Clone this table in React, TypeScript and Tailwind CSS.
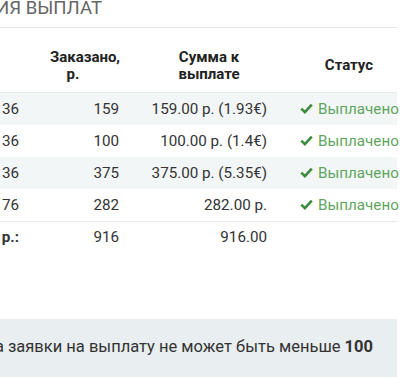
const rows = [
  { id: '№ 36', ordered: '159', sum: '159.00 р. (1.93€)' },
  { id: '№ 36', ordered: '100', sum: '100.00 р. (1.4€)' },
  { id: '№ 36', ordered: '375', sum: '375.00 р. (5.35€)' },
  { id: '№ 76', ordered: '282', sum: '282.00 р.' },
];

const Check = () => (
  <svg className="w-[13px] h-[11px] text-[#3d8b3d] shrink-0" viewBox="0 0 13 11" fill="none" stroke="currentColor">
    <path d="M1.3 5.6l3.6 3.5L11.8 1.6" strokeWidth={2.6} strokeLinejoin="miter" />
  </svg>
);

export default function App() {
  return (
    <div
      className="w-[415px] h-[377px] overflow-hidden bg-white text-[#333]"
      style={{ fontFamily: 'Roboto, "Noto Sans", sans-serif' }}
    >
      <div className="-ml-[120px] w-[517px]">
        {/* Заголовок */}
        <div className="w-[222px] flex justify-end whitespace-nowrap">
          <h2 className="-mt-[4px] text-[18.6px] leading-[24px] text-[#666] font-normal">
            ИСТОРИЯ ВЫПЛАТ
          </h2>
        </div>
        <hr className="mt-[7px] border-t border-[#e8e8e8]" />

        {/* Таблица */}
        <div className="mt-[18px] text-[15.2px]">
          <div className="grid grid-cols-[139px_108px_148px_122px] font-bold text-[15px] leading-[17px] text-[#222] border-b border-[#e6eaeb] pb-[9px]">
            <div />
            <div className="pt-[3px]">
              <div className="text-center pl-[24px]">Заказано,</div>
              <div className="text-center">р.</div>
            </div>
            <div className="text-center pl-[16px] pt-[3px]">Сумма к<br />выплате</div>
            <div className="text-center pl-[26px] self-center pt-[2px]">Статус</div>
          </div>

          {rows.map((r, i) => (
            <div
              key={i}
              className={`grid grid-cols-[139px_108px_148px_122px] h-[32px] items-center ${i % 2 === 0 ? 'bg-[#f3f6f7]' : 'bg-white'}`}
            >
              <div className="text-right">{r.id}</div>
              <div className="text-right pr-[8px]">{r.ordered}</div>
              <div className="text-right pr-[8px]">{r.sum}</div>
              <div className="flex items-center gap-[5px] pl-[25px] text-[#5fa65d] whitespace-nowrap">
                <Check />
                <span>Выплачено</span>
              </div>
            </div>
          ))}

          <div className="grid grid-cols-[139px_108px_148px_122px] h-[32px] items-center border-t border-[#e6eaeb]">
            <div className="text-right font-bold">Итого, р.:</div>
            <div className="text-right pr-[8px]">916</div>
            <div className="text-right pr-[8px]">916.00</div>
            <div />
          </div>
        </div>

        {/* Примечание */}
        <div className="mt-[66px] bg-[#e9eef0] h-[70px] flex items-center justify-end pr-[24px] pb-[13px] text-[16.5px] text-[#333] whitespace-nowrap">
          <span>
            Минимальная сумма заявки на выплату не может быть меньше <b>100</b>
          </span>
        </div>
      </div>
    </div>
  );
}
